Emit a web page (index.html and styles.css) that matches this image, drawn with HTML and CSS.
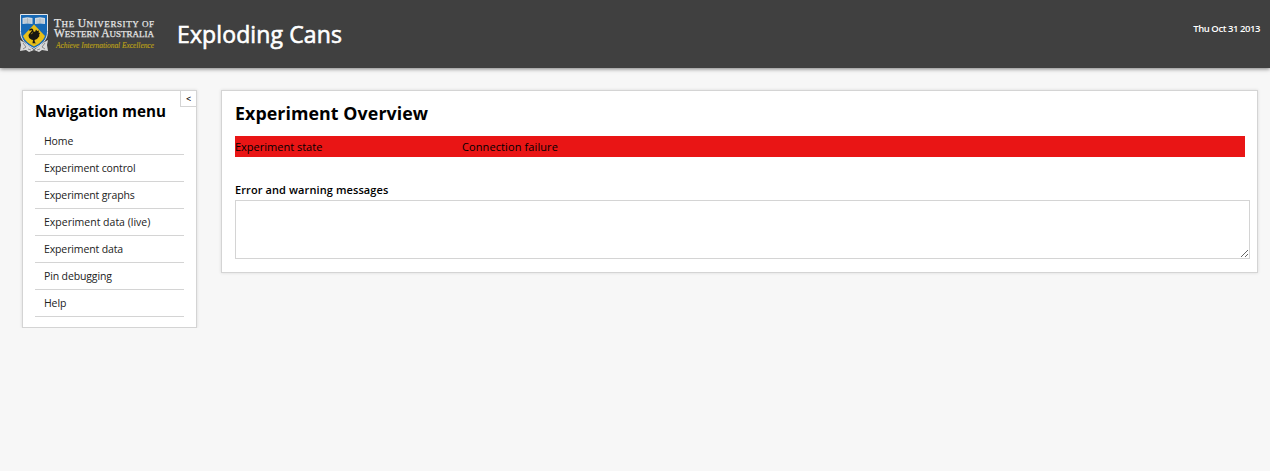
FILE: index.html
```html
<!DOCTYPE html>
<html lang="en">
<head>
<meta charset="utf-8">
<title>Exploding Cans</title>
<link rel="stylesheet" href="styles.css">
</head>
<body>
<header class="header">
  <svg class="logo" width="137" height="40" viewBox="0 0 137 40" role="img" aria-label="The University of Western Australia">
    <path fill="#d9d9d9" d="M0 26l5 3 9 7 9-7 5-3-1 5 1 6-6-1-3 2-5-2-5 2-3-2-6 1 1-6z"/>
    <path fill="none" stroke="#777" stroke-width=".8" d="M3 29l3 4-3 2M25 29l-3 4 3 2M8 35l3 1M20 35l-3 1"/>
    <path fill="#1769b5" stroke="#e4e6e8" stroke-width="1" d="M.5.5h27v17c0 8-5 13-13.500 17C5.500 30.500.5 25.500.5 17.500z"/>
    <path fill="#cfd9e2" d="M2.500 4l5-.8 5 .8v6l-5-.4-5 .4zM15 4l5-.8 5 .8v6l-5-.4-5 .4z"/>
    <path stroke="#9aa8b3" stroke-width=".6" d="M7.500 3.500v6M20 3.500v6M3.500 6h8M16 6h8M3.500 8h8M16 8h8"/>
    <path fill="#e8bf18" d="M14 10.500l11 11.500c-2 5-6 8-11 10.500C9 30 5 27 3 22z"/>
    <path fill="none" stroke="#171712" stroke-width="1.600" d="M9.500 16.500c1-2 3.500-1.500 3 .5-.4 1.500-3 2.500-3 4.500"/>
    <path fill="#171712" d="M8.800 20.500l3.200-.5 1.500-3 1.500 1 1-2.500 1.200 1.500 1.800-.5-.5 2 1.500.5-1 2 .5 1-2.500 3-2.500 1 .5 2.500 1.500.8h-4l.5-3.300c-3-.5-5-2.500-4.200-5.500z"/>
    <text class="logo-name" x="34" y="12.500" textLength="100"><tspan class="cap">T</tspan>HE <tspan class="cap">U</tspan>NIVERSITY OF</text>
    <text class="logo-name" x="34" y="23" textLength="100"><tspan class="cap">W</tspan>ESTERN <tspan class="cap">A</tspan>USTRALIA</text>
    <text class="logo-motto" x="36" y="34" textLength="98">Achieve International Excellence</text>
  </svg>
  <h1 class="title">Exploding Cans</h1>
  <div class="date">Thu Oct 31 2013</div>
</header>
<div class="page">
  <nav class="panel sidebar">
    <button class="collapse" type="button">&lt;</button>
    <h2 class="nav-title">Navigation menu</h2>
    <ul class="menu">
      <li><a>Home</a></li>
      <li><a>Experiment control</a></li>
      <li><a>Experiment graphs</a></li>
      <li><a>Experiment data (live)</a></li>
      <li><a>Experiment data</a></li>
      <li><a>Pin debugging</a></li>
      <li><a>Help</a></li>
    </ul>
  </nav>
  <main class="panel content">
    <h2 class="content-title">Experiment Overview</h2>
    <div class="state">
      <span>Experiment state</span>
      <span class="state-value">Connection failure</span>
    </div>
    <label class="label" for="errors">Error and warning messages</label>
    <textarea class="errors" id="errors"></textarea>
  </main>
</div>
</body>
</html>
```

FILE: styles.css
```css
* { box-sizing: border-box; }
body {
  margin: 0;
  background: #f7f7f7;
  color: #000;
  font: 11px/20px "Open Sans", sans-serif;
}
h1, h2 { margin: 0; }
.header {
  display: flex;
  height: 68px;
  padding: 14px 10px 0 20px;
  background: #404040;
  box-shadow: 0 1px 4px rgba(0, 0, 0, .5);
  color: #fff;
}
.logo { display: block; flex: none; }
.logo-name {
  font: 9px "Liberation Serif", serif;
  fill: #e6e6e6;
  stroke: #e6e6e6;
  stroke-width: .25px;
}
.cap { font-size: 11.500px; }
.logo-motto {
  font: italic 7.500px "Liberation Serif", serif;
  fill: #b89f18;
  stroke: #b89f18;
  stroke-width: .15px;
}
.title {
  margin: 4px 0 0 20px;
  font-size: 23px;
  line-height: 32px;
  font-weight: 400;
  letter-spacing: .12px;
  -webkit-text-stroke: .6px #fff;
}
.date {
  margin: 5px 0 0 auto;
  font-size: 9.500px;
  font-weight: 600;
  letter-spacing: -.44px;
}
.page {
  display: flex;
  align-items: flex-start;
  gap: 24px;
  padding: 22px 12px 0 22px;
}
.panel {
  background: #fff;
  border: 1px solid #d4d4d4;
  box-shadow: 0 0 3px rgba(0, 0, 0, .12);
}
.sidebar {
  position: relative;
  flex: none;
  width: 175px;
  height: 238px;
  padding: 8px 12px 0;
}
.collapse {
  position: absolute;
  top: -1px;
  right: -1px;
  width: 17px;
  height: 17px;
  padding: 0;
  border: 1px solid #d4d4d4;
  background: #fff;
  color: #000;
  font: 600 9px/14px "Open Sans", sans-serif;
}
.nav-title { font-size: 15.200px; line-height: 24px; white-space: nowrap; }
.menu { margin: 5px 0 0; padding: 0; list-style: none; }
.menu li {
  height: 27px;
  padding-left: 9px;
  border-bottom: 1px solid #d4d4d4;
  color: #222;
  font-size: 10.500px;
  letter-spacing: -.13px;
  line-height: 27px;
}
.menu li:nth-child(4) { letter-spacing: 0; }
.content { flex: 1; min-width: 0; height: 183px; padding: 9px 12px 0 13px; }
.content-title { font-size: 17.800px; line-height: 26px; letter-spacing: .08px; }
.state {
  display: grid;
  grid-template-columns: 227px 1fr;
  height: 21px;
  margin-top: 10px;
  background: #e91515;
  line-height: 22px;
}
.state-value { letter-spacing: .1px; }
.label { display: block; margin-top: 23px; font-weight: 600; letter-spacing: .1px; }
.errors {
  display: block;
  width: 1015px;
  height: 59px;
  border: 1px solid #d4d4d4;
  background: #fff;
  resize: both;
}
```
